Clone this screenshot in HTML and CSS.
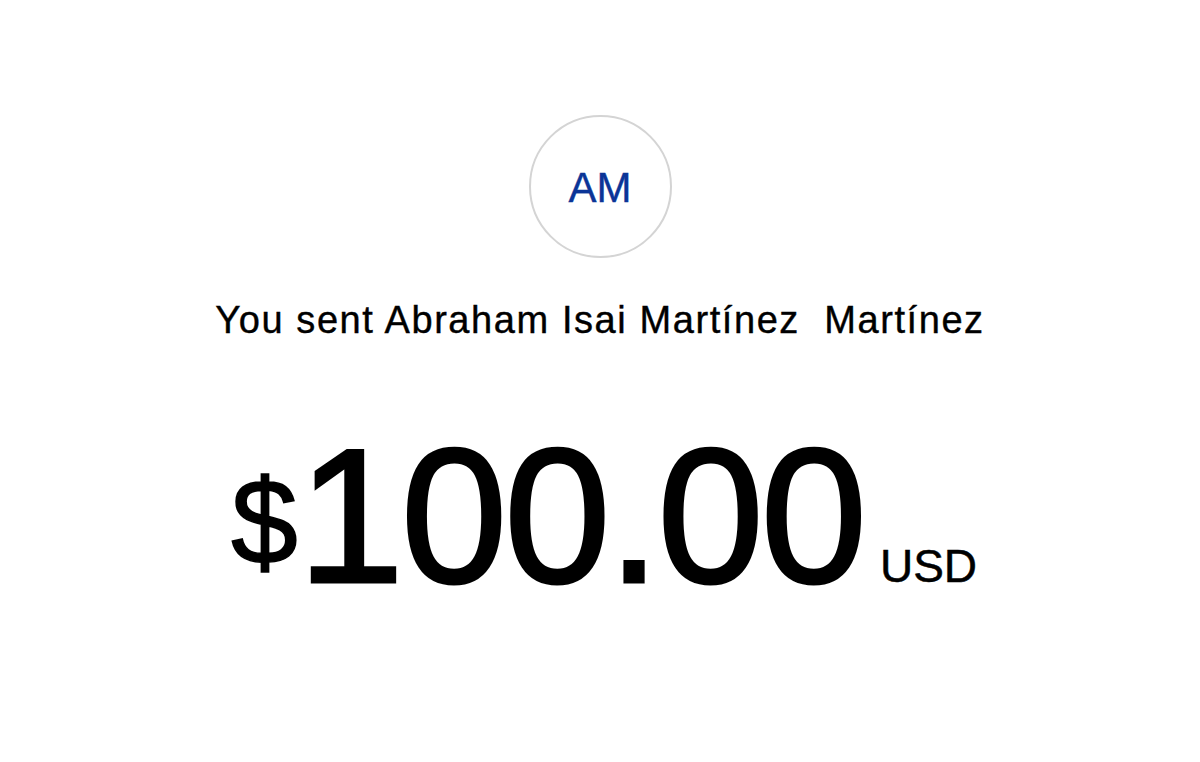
FILE: index.html
```html
<!DOCTYPE html>
<html lang="en">
<head>
<meta charset="utf-8">
<title>Payment sent</title>
<link rel="stylesheet" href="styles.css">
</head>
<body>
<main class="receipt">
  <div class="avatar"><span class="initials">AM</span></div>
  <p class="recipient">You sent Abraham Isai Martínez&nbsp; Martínez</p>
  <div class="amount">
    <span class="currency">$</span><span class="value">100.00</span><span class="code">USD</span>
  </div>
</main>
</body>
</html>
```
FILE: styles.css
```css
html, body {
  margin: 0;
  padding: 0;
  background: #ffffff;
}
body {
  font-family: "Liberation Sans", Arial, sans-serif;
  color: #000000;
  width: 1200px;
  height: 762px;
  overflow: hidden;
}
.receipt {
  display: flex;
  flex-direction: column;
  align-items: center;
  padding-top: 115px;
}
.avatar {
  width: 139px;
  height: 139px;
  border: 2px solid #d4d4d4;
  border-radius: 50%;
  display: flex;
  align-items: center;
  justify-content: center;
}
.initials {
  font-size: 42px;
  line-height: 1;
  color: #0b3597;
  -webkit-text-stroke: 0.4px #0b3597;
  padding-top: 2px;
}
.recipient {
  margin: 40px 0 0 0;
  font-size: 38px;
  line-height: 1.2;
  letter-spacing: 1.58px;
  -webkit-text-stroke: 0.4px #000;
  white-space: pre;
}
.amount {
  margin-top: 76px;
  line-height: 1;
  white-space: nowrap;
  padding-left: 8px;
}
.currency {
  font-size: 120px;
  vertical-align: 19px;
  -webkit-text-stroke: 1.5px #000;
}
.value {
  font-size: 191px;
  letter-spacing: -3px;
  -webkit-text-stroke: 3px #000;
}
.code {
  font-size: 46px;
  margin-left: 16px;
  -webkit-text-stroke: 0.5px #000;
}
```
